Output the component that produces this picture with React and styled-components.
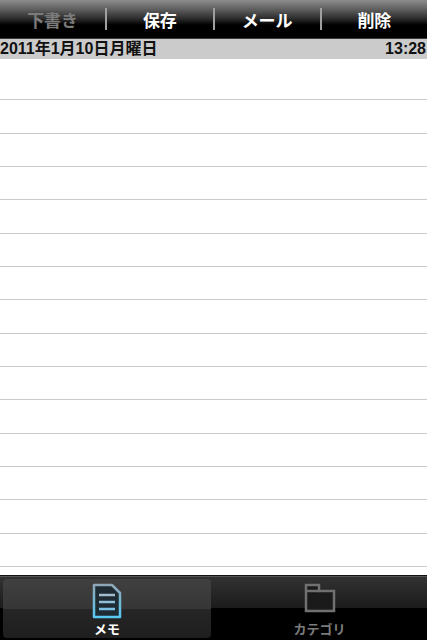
import React from "react";
import styled, { createGlobalStyle } from "styled-components";

const GlobalStyle = createGlobalStyle`
  html, body {
    margin: 0;
    padding: 0;
    background: #fff;
  }
  body {
    font-family: "Liberation Sans", "Noto Sans CJK JP", sans-serif;
  }
`;

const Screen = styled.div`
  width: 427px;
  height: 640px;
  display: flex;
  flex-direction: column;
  overflow: hidden;
  background: #fff;
`;

const Toolbar = styled.div`
  height: 39px;
  flex: none;
  display: flex;
  align-items: center;
  background: linear-gradient(#8c8c8c 0%, #5e5e5e 25%, #2a2a2a 50%, #000 66%, #000 100%);
  border-bottom: 1px solid #3a3a3a;
  box-sizing: border-box;
`;

const ToolButton = styled.div`
  flex: 1;
  height: 22px;
  display: flex;
  align-items: center;
  justify-content: center;
  font-size: 17px;
  font-weight: 700;
  color: ${(props) => (props.$dim ? "#7b7b7b" : "#fff")};
  border-right: ${(props) => (props.$last ? "none" : "2px solid #a0a0a0")};
`;

const DateBar = styled.div`
  height: 20px;
  flex: none;
  box-sizing: border-box;
  display: flex;
  align-items: baseline;
  justify-content: space-between;
  background: #cbcbcb;
  color: #111;
  font-size: 16px;
  line-height: 18px;
  font-weight: 700;
  padding: 1px 1px 0 0;
  overflow: hidden;
`;

const Paper = styled.div`
  flex: 1;
  min-height: 0;
  display: flex;
  flex-direction: column;
  padding-top: 8px;
  overflow: hidden;
`;

const Rule = styled.div`
  height: 33.33px;
  flex: none;
  box-sizing: border-box;
  border-bottom: 1px solid #cacaca;
`;

const TabBar = styled.div`
  height: 65px;
  flex: none;
  display: grid;
  grid-template-columns: 208px 1fr;
  column-gap: 1px;
  box-sizing: border-box;
  border-top: 1px solid #111;
  box-shadow: inset 0 1px 0 #555;
  background: linear-gradient(#333 0%, #1b1b1b 50%, #000 50%, #000 100%);
  padding: 3px 0 2px 3px;
`;

const Tab = styled.div`
  display: flex;
  flex-direction: column;
  align-items: center;
  border-radius: 4px;
  padding-top: 4px;
  background: ${(props) =>
    props.$active
      ? "linear-gradient(#404040 0%, #363636 50%, #262626 50%, #1e1e1e 100%)"
      : "transparent"};
`;

const TabIcon = styled.div`
  height: 36px;
  display: flex;
  align-items: flex-start;
`;

const TabLabel = styled.div`
  font-size: 13px;
  font-weight: 700;
  line-height: 16px;
  margin-top: 3px;
  color: ${(props) => (props.$active ? "#fff" : "#7c7c7c")};
`;

const MemoIcon = () => (
  <svg width="30" height="36" viewBox="0 0 30 36" fill="none">
    <defs>
      <linearGradient id="memoEdge" x1="0" y1="0" x2="0" y2="1">
        <stop offset="0" stopColor="#8fa6b4" />
        <stop offset="1" stopColor="#58c8f2" />
      </linearGradient>
    </defs>
    <path
      d="M2 2H20L28 10V34H2Z"
      fill="#1e2b33"
      stroke="url(#memoEdge)"
      strokeWidth="2.5"
      strokeLinejoin="round"
    />
    <path d="M7 12H23" stroke="#a3bccb" strokeWidth="2.5" />
    <path d="M7 19H23" stroke="#90bdd8" strokeWidth="2.5" />
    <path d="M7 26H23" stroke="#7cc0e6" strokeWidth="2.5" />
  </svg>
);

const FolderIcon = () => (
  <svg width="32" height="30" viewBox="0 0 32 30" fill="none">
    <path
      d="M2 28V2H15V8H30V28Z"
      fill="#1a1a1a"
      stroke="#707070"
      strokeWidth="2.5"
    />
    <path d="M2 8H15" stroke="#707070" strokeWidth="2.5" />
  </svg>
);

const buttons = ["下書き", "保存", "メール", "削除"];
const rules = Array.from({ length: 15 }, (_, i) => i);

export default function App() {
  return (
    <Screen>
      <GlobalStyle />
      <Toolbar>
        {buttons.map((label, i) => (
          <ToolButton key={label} $dim={i === 0} $last={i === buttons.length - 1}>
            {label}
          </ToolButton>
        ))}
      </Toolbar>
      <DateBar>
        <span>2011年1月10日月曜日</span>
        <span>13:28</span>
      </DateBar>
      <Paper>
        {rules.map((i) => (
          <Rule key={i} />
        ))}
      </Paper>
      <TabBar>
        <Tab $active>
          <TabIcon>
            <MemoIcon />
          </TabIcon>
          <TabLabel $active>メモ</TabLabel>
        </Tab>
        <Tab>
          <TabIcon>
            <FolderIcon />
          </TabIcon>
          <TabLabel>カテゴリ</TabLabel>
        </Tab>
      </TabBar>
    </Screen>
  );
}
